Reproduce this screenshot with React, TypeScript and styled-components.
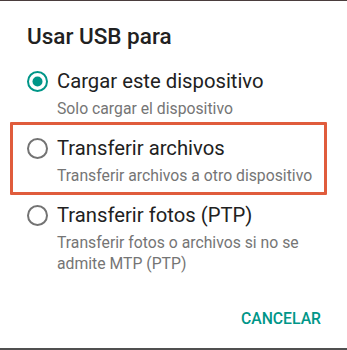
import React from 'react';
import styled, { createGlobalStyle } from 'styled-components';

const GlobalStyle = createGlobalStyle`
  html, body {
    margin: 0;
    padding: 0;
    background: #fff;
  }
  body {
    font-family: Roboto, "Noto Sans", "Liberation Sans", sans-serif;
  }
`;

const Dialog = styled.div`
  width: 347px;
  height: 350px;
  box-sizing: border-box;
  border-top: 1px solid #4a3d3d;
  border-bottom: 2px solid #505050;
  background: #fff;
  display: flex;
  flex-direction: column;
  padding: 22px 24px 0 27px;
`;

const Title = styled.h2`
  margin: 0 0 20px;
  font-size: 22.5px;
  line-height: 26px;
  font-weight: 500;
  color: #212121;
`;

const Options = styled.ul`
  list-style: none;
  margin: 0;
  padding: 0;
  display: flex;
  flex-direction: column;
  gap: 17px;
`;

const Option = styled.li<{ $highlight?: boolean }>`
  position: relative;
  &::after {
    content: '';
    display: ${p => (p.$highlight ? 'block' : 'none')};
    position: absolute;
    top: -14px;
    bottom: -9px;
    left: -17px;
    right: -4px;
    border: 3.5px solid #e05c3c;
    border-radius: 1px;
  }
`;

const LabelRow = styled.label`
  display: flex;
  align-items: center;
  gap: 9px;
  font-size: 20.25px;
  line-height: 24px;
  color: #212121;
`;

const Summary = styled.p`
  margin: 4.5px 0 0 30px;
  font-size: 15.75px;
  line-height: 21.5px;
  color: #757575;
`;

const Actions = styled.div`
  margin-top: auto;
  display: flex;
  justify-content: flex-end;
  padding: 0 2px 19.5px 0;
`;

const TextButton = styled.button`
  border: none;
  background: none;
  padding: 0;
  font-family: inherit;
  font-size: 15.75px;
  line-height: 20px;
  font-weight: 500;
  color: #009688;
`;

function Radio({ checked }: { checked?: boolean }) {
  return (
    <svg width="21" height="21" viewBox="0 0 21 21" style={{ flexShrink: 0 }}>
      <circle cx="10.5" cy="10.5" r="9.5" fill="none" stroke={checked ? '#009688' : '#737373'} strokeWidth="2" />
      {checked && <circle cx="10.5" cy="10.5" r="5" fill="#009688" />}
    </svg>
  );
}

const options = [
  { label: 'Cargar este dispositivo', summary: 'Solo cargar el dispositivo', checked: true },
  { label: 'Transferir archivos', summary: 'Transferir archivos a otro dispositivo', highlight: true },
  { label: 'Transferir fotos (PTP)', summary: 'Transferir fotos o archivos si no se admite MTP (PTP)' },
];

export default function App() {
  return (
    <>
      <GlobalStyle />
      <Dialog>
        <Title>Usar USB para</Title>
        <Options>
          {options.map(o => (
            <Option key={o.label} $highlight={o.highlight}>
              <LabelRow>
                <Radio checked={o.checked} />
                {o.label}
              </LabelRow>
              <Summary>{o.summary}</Summary>
            </Option>
          ))}
        </Options>
        <Actions>
          <TextButton>CANCELAR</TextButton>
        </Actions>
      </Dialog>
    </>
  );
}
